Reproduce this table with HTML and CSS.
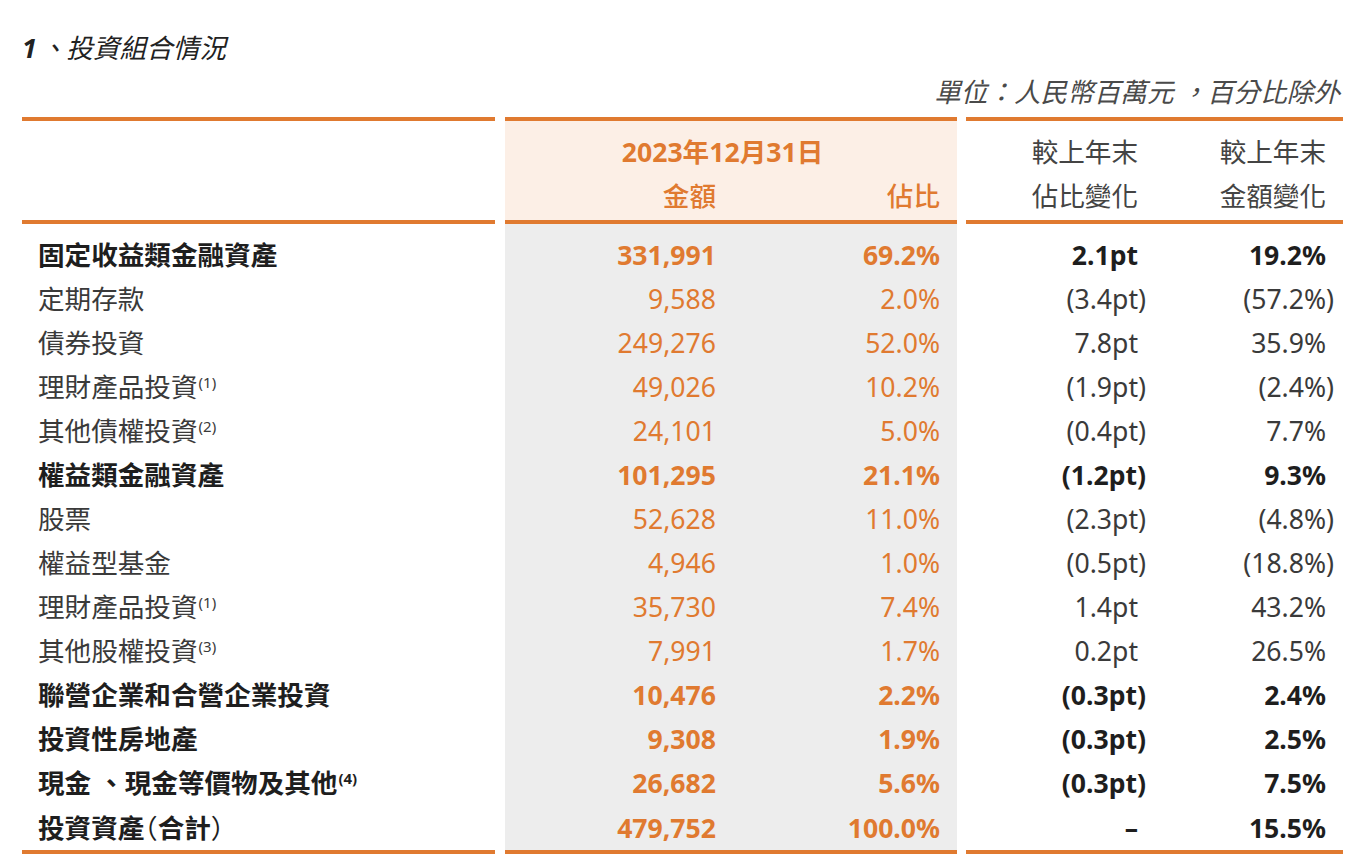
FILE: index.html
```html
<!DOCTYPE html>
<html lang="zh-Hant">
<head>
<meta charset="utf-8">
<title>投資組合情況</title>
<link rel="stylesheet" href="styles.css">
</head>
<body>
<div class="page">
  <h2 class="title"><span class="num">1</span>、投資組合情況</h2>
  <div class="unit">單位：人民幣百萬元 ，百分比除外</div>
  <table class="tbl">
    <colgroup>
      <col class="c-label"><col class="c-gap1"><col class="c-amt"><col class="c-pct"><col class="c-gap2"><col class="c-chg1"><col class="c-chg2">
    </colgroup>
    <thead>
      <tr class="h1">
        <th class="hl" rowspan="2"></th>
        <th class="sp" rowspan="2"></th>
        <th class="hdate" colspan="2">2023年12月31日</th>
        <th class="sp" rowspan="2"></th>
        <th class="hchg r1" rowspan="2">較上年末<br>佔比變化</th>
        <th class="hchg r2" rowspan="2">較上年末<br>金額變化</th>
      </tr>
      <tr class="h2">
        <th class="hamt">金額</th>
        <th class="hpct">佔比</th>
      </tr>
    </thead>
    <tbody>
      <tr class="pad-top"><td></td><td class="sp"></td><td class="g"></td><td class="g"></td><td class="sp"></td><td></td><td></td></tr>
      <tr class="b"><td class="lab">固定收益類金融資產</td><td class="sp"></td><td class="amt">331,991</td><td class="pct">69.2%</td><td class="sp"></td><td class="c1">2.1pt</td><td class="c2">19.2%</td></tr>
      <tr><td class="lab">定期存款</td><td class="sp"></td><td class="amt">9,588</td><td class="pct">2.0%</td><td class="sp"></td><td class="c1 neg">(3.4pt)</td><td class="c2 neg">(57.2%)</td></tr>
      <tr><td class="lab">債券投資</td><td class="sp"></td><td class="amt">249,276</td><td class="pct">52.0%</td><td class="sp"></td><td class="c1">7.8pt</td><td class="c2">35.9%</td></tr>
      <tr><td class="lab">理財產品投資<sup>(1)</sup></td><td class="sp"></td><td class="amt">49,026</td><td class="pct">10.2%</td><td class="sp"></td><td class="c1 neg">(1.9pt)</td><td class="c2 neg">(2.4%)</td></tr>
      <tr><td class="lab">其他債權投資<sup>(2)</sup></td><td class="sp"></td><td class="amt">24,101</td><td class="pct">5.0%</td><td class="sp"></td><td class="c1 neg">(0.4pt)</td><td class="c2">7.7%</td></tr>
      <tr class="b"><td class="lab">權益類金融資產</td><td class="sp"></td><td class="amt">101,295</td><td class="pct">21.1%</td><td class="sp"></td><td class="c1 neg">(1.2pt)</td><td class="c2">9.3%</td></tr>
      <tr><td class="lab">股票</td><td class="sp"></td><td class="amt">52,628</td><td class="pct">11.0%</td><td class="sp"></td><td class="c1 neg">(2.3pt)</td><td class="c2 neg">(4.8%)</td></tr>
      <tr><td class="lab">權益型基金</td><td class="sp"></td><td class="amt">4,946</td><td class="pct">1.0%</td><td class="sp"></td><td class="c1 neg">(0.5pt)</td><td class="c2 neg">(18.8%)</td></tr>
      <tr><td class="lab">理財產品投資<sup>(1)</sup></td><td class="sp"></td><td class="amt">35,730</td><td class="pct">7.4%</td><td class="sp"></td><td class="c1">1.4pt</td><td class="c2">43.2%</td></tr>
      <tr><td class="lab">其他股權投資<sup>(3)</sup></td><td class="sp"></td><td class="amt">7,991</td><td class="pct">1.7%</td><td class="sp"></td><td class="c1">0.2pt</td><td class="c2">26.5%</td></tr>
      <tr class="b"><td class="lab">聯營企業和合營企業投資</td><td class="sp"></td><td class="amt">10,476</td><td class="pct">2.2%</td><td class="sp"></td><td class="c1 neg">(0.3pt)</td><td class="c2">2.4%</td></tr>
      <tr class="b"><td class="lab">投資性房地產</td><td class="sp"></td><td class="amt">9,308</td><td class="pct">1.9%</td><td class="sp"></td><td class="c1 neg">(0.3pt)</td><td class="c2">2.5%</td></tr>
      <tr class="b"><td class="lab">現金 、現金等價物及其他<sup>(4)</sup></td><td class="sp"></td><td class="amt">26,682</td><td class="pct">5.6%</td><td class="sp"></td><td class="c1 neg">(0.3pt)</td><td class="c2">7.5%</td></tr>
      <tr class="b"><td class="lab">投資資產<span class="half">（</span>合計<span class="half">）</span></td><td class="sp"></td><td class="amt">479,752</td><td class="pct">100.0%</td><td class="sp"></td><td class="c1">–</td><td class="c2">15.5%</td></tr>
      <tr class="pad-bot"><td></td><td class="sp"></td><td class="g"></td><td class="g"></td><td class="sp"></td><td></td><td></td></tr>
    </tbody>
  </table>
</div>
</body>
</html>
```

FILE: styles.css
```css
* { box-sizing: border-box; }

body {
  margin: 0;
  background: #ffffff;
  font-family: "Noto Sans", "Noto Sans CJK TC", sans-serif;
  color: #3a3a3a;
}

.page {
  width: 1343px;
  padding: 26px 0 0 22px;
}

.title {
  margin: 0;
  font-size: 26.6px;
  line-height: 44px;
  font-style: italic;
  font-weight: 400;
  color: #222222;
}

.title .num {
  font-weight: 700;
  margin-right: 3px;
}

.unit {
  font-size: 26.6px;
  line-height: 44px;
  font-style: italic;
  color: #4a4a4a;
  text-align: right;
  padding-right: 3px;
  margin-bottom: 3px;
}

.tbl {
  width: 1321px;
  table-layout: fixed;
  border-collapse: separate;
  border-spacing: 0;
  font-size: 26.6px;
}

.c-label { width: 473px; }
.c-gap1 { width: 10px; }
.c-amt { width: 226px; }
.c-pct { width: 226px; }
.c-gap2 { width: 9px; }
.c-chg1 { width: 188px; }
.c-chg2 { width: 189px; }

.tbl th,
.tbl td {
  padding: 0;
  font-weight: 400;
  white-space: nowrap;
}

/* header */
.tbl thead th {
  vertical-align: top;
  line-height: 44px;
}

.tbl thead .h1 th { border-top: 4px solid #e07a30; padding-top: 9px; }
.tbl thead .h1 th.hl,
.tbl thead .h1 th.hchg { border-bottom: 4px solid #e07a30; padding-bottom: 2px; }
.tbl thead .h2 th { border-bottom: 4px solid #e07a30; padding-bottom: 2px; }

.tbl thead th.sp { border: none; padding: 0; }

.hdate {
  background: #fcefe6;
  color: #e07a30;
  font-weight: 700 !important;
  text-align: center;
  padding-right: 17px !important;
}

.hamt,
.hpct {
  background: #fcefe6;
  color: #e07a30;
  font-weight: 500 !important;
  text-align: right;
}

.hamt { padding-right: 15px !important; }
.hpct { padding-right: 17px !important; }

.hchg {
  text-align: right;
  color: #444444;
}

.hchg.r1 { padding-right: 16px !important; }
.hchg.r2 { padding-right: 17px !important; }

/* body */
.tbl tbody td {
  height: 44px;
  line-height: 44px;
  vertical-align: middle;
}

.tbl tbody tr.pad-top td { height: 9px; line-height: 0; }
.tbl tbody tr.pad-bot td { height: 2px; line-height: 0; border-bottom: 4px solid #e07a30; }
.tbl tbody tr.pad-bot td.sp { border-bottom: none; }

.tbl tbody td.g { background: #ededed; }

.lab {
  padding-left: 16px !important;
  color: #3a3a3a;
}

.half {
  font-family: "Noto Sans CJK TC", sans-serif;
  font-weight: 400;
  font-feature-settings: "halt" 1;
}

.amt,
.pct {
  background: #ededed;
  color: #e07a30;
  text-align: right;
}

.amt { padding-right: 15px !important; }
.pct { padding-right: 17px !important; }

.c1,
.c2 {
  text-align: right;
  color: #3a3a3a;
}

.c1 { padding-right: 16px !important; }
.c2 { padding-right: 17px !important; }
.c1.neg { padding-right: 8px !important; }
.c2.neg { padding-right: 9px !important; }

.tbl tbody tr.b td { font-weight: 700; color: #1e1e1e; }
.tbl tbody tr.b td.amt,
.tbl tbody tr.b td.pct { color: #e07a30; }

sup {
  font-size: 15px;
  line-height: 0;
  vertical-align: 9px;
  margin-left: 1px;
}
```
